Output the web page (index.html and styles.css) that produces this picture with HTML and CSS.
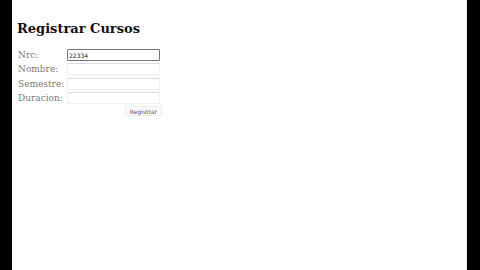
FILE: index.html
```html
<!DOCTYPE html>
<html lang="es">
<head>
    <meta charset="UTF-8">
    <title>Registrar Cursos</title>
    <link rel="stylesheet" href="styles.css">
</head>
<body>
    <div class="page">
        <h1>Registrar Cursos</h1>
        <form class="form">
            <div class="row">
                <label for="nrc">Nrc:</label>
                <input type="text" id="nrc" class="focused" value="22334">
            </div>
            <div class="row">
                <label for="nombre">Nombre:</label>
                <input type="text" id="nombre">
            </div>
            <div class="row">
                <label for="semestre">Semestre:</label>
                <input type="text" id="semestre">
            </div>
            <div class="row">
                <label for="duracion">Duracion:</label>
                <input type="text" id="duracion">
            </div>
            <div class="actions">
                <button type="button">Registrar</button>
            </div>
        </form>
    </div>
</body>
</html>
```

FILE: styles.css
```css
* {
    box-sizing: border-box;
    margin: 0;
    padding: 0;
}

body {
    background: #000;
    width: 480px;
    height: 270px;
    overflow: hidden;
}

.page {
    margin-left: 12px;
    width: 455px;
    height: 270px;
    background: #fff;
    border-right: 1px solid #eee;
    padding: 21px 0 0 5px;
}

h1 {
    font-family: "DejaVu Serif", serif;
    font-size: 13px;
    font-weight: bold;
    color: #111;
    line-height: 16px;
    margin-bottom: 11px;
}

.form {
    width: 144px;
    margin-left: 1px;
}

.row {
    display: flex;
    align-items: center;
    height: 14.3px;
}

label {
    width: 49px;
    font-family: "DejaVu Serif", serif;
    font-size: 9px;
    color: #7a7a7a;
}

input {
    width: 93px;
    height: 12px;
    border: 1px solid #f0f0f0;
    border-top-color: #dcdcdc;
    font-family: "DejaVu Sans", sans-serif;
    font-size: 6px;
    padding: 0 1px;
    color: #222;
}

input.focused {
    border: 1px solid #777;
    border-radius: 1px;
}

.actions {
    display: flex;
    justify-content: flex-end;
    padding-top: 1px;
}

button {
    font-family: "DejaVu Sans", sans-serif;
    font-size: 6px;
    color: #555;
    background: #fafafa;
    border: 1px solid #ececec;
    height: 10px;
    padding: 0 4px;
}
```
